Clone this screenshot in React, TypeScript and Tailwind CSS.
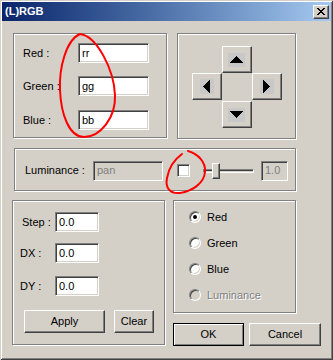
import React from "react";

type Kids = { children?: React.ReactNode };

function Group({ className = "", children }: { className?: string } & Kids) {
  return (
    <div className={`border border-[#808080] shadow-[inset_1px_1px_0_#fff,1px_1px_0_#fff] ${className}`}>
      {children}
    </div>
  );
}

function Field({ w, value, disabled }: { w: string; value: string; disabled?: boolean }) {
  return (
    <div
      className={`${w} h-[20px] flex items-center pl-[3px] border border-[#808080] border-b-white border-r-white shadow-[inset_1px_1px_0_#404040,inset_-1px_-1px_0_#d4d0c8] ${
        disabled ? "bg-[#d4d0c8] text-[#808080]" : "bg-white text-black"
      }`}
    >
      {value}
    </div>
  );
}

function Btn({ className = "", def, children }: { className?: string; def?: boolean } & Kids) {
  return (
    <div
      className={`flex items-center justify-center ${
        def
          ? "border border-black shadow-[inset_1px_1px_0_#fff,inset_-1px_-1px_0_#808080]"
          : "border border-white border-b-[#404040] border-r-[#404040] shadow-[inset_-1px_-1px_0_#808080]"
      } ${className}`}
    >
      {children}
    </div>
  );
}

function ArrowBtn({ dir, className = "" }: { dir: "up" | "down" | "left" | "right"; className?: string }) {
  const vertical = dir === "up" || dir === "down";
  return (
    <div
      className={`w-[30px] h-[27px] border border-white border-b-[#404040] border-r-[#404040] shadow-[inset_-1px_-1px_0_#808080] flex items-center justify-center ${className}`}
    >
      <div
        className={`${vertical ? "w-[17px] h-[14px]" : "w-[14px] h-[15px]"} bg-[#c8c8c8] flex items-center justify-center`}
      >
        {dir === "up" && (
          <svg width="13" height="7" viewBox="0 0 13 7" shapeRendering="crispEdges">
            <polygon points="6.5,0 13,7 0,7" fill="#000" />
          </svg>
        )}
        {dir === "down" && (
          <svg width="13" height="7" viewBox="0 0 13 7" shapeRendering="crispEdges">
            <polygon points="0,0 13,0 6.5,7" fill="#000" />
          </svg>
        )}
        {dir === "left" && (
          <svg width="7" height="13" viewBox="0 0 7 13" shapeRendering="crispEdges">
            <polygon points="7,0 7,13 0,6.5" fill="#000" />
          </svg>
        )}
        {dir === "right" && (
          <svg width="7" height="13" viewBox="0 0 7 13" shapeRendering="crispEdges">
            <polygon points="0,0 7,6.5 0,13" fill="#000" />
          </svg>
        )}
      </div>
    </div>
  );
}

function Radio({ checked, disabled, label }: { checked?: boolean; disabled?: boolean; label: string }) {
  return (
    <div className="h-[26px] flex items-center">
      <div
        className={`w-[12px] h-[12px] rounded-full border border-[#808080] border-b-white border-r-white shadow-[inset_1px_1px_0_#404040,inset_-1px_-1px_0_#d4d0c8] flex items-center justify-center ${
          disabled ? "bg-[#d4d0c8]" : "bg-white"
        }`}
      >
        {checked && <div className="w-[4px] h-[4px] rounded-full bg-black" />}
      </div>
      <span className={`ml-[6px] ${disabled ? "text-[#808080] [text-shadow:1px_1px_0_#fff]" : "text-black"}`}>
        {label}
      </span>
    </div>
  );
}

function CloseGlyph() {
  const rows = [
    "XX....XX",
    ".XX..XX.",
    "..XXXX..",
    "...XX...",
    "..XXXX..",
    ".XX..XX.",
    "XX....XX",
  ];
  return (
    <svg width="8" height="7" viewBox="0 0 8 7" shapeRendering="crispEdges">
      {rows.flatMap((r, y) =>
        r.split("").map((c, x) => (c === "X" ? <rect key={`${x}-${y}`} x={x} y={y} width="1" height="1" fill="#000" /> : null))
      )}
    </svg>
  );
}

export default function App() {
  return (
    <div className="relative w-[333px] h-[360px] p-[2px] bg-[#d4d0c8] flex flex-col font-['Liberation_Sans',Arial,sans-serif] text-[11px] leading-none text-black shadow-[inset_1px_1px_0_#d4d0c8,inset_-1px_-1px_0_#404040,inset_2px_2px_0_#fff,inset_-2px_-2px_0_#808080]">
      {/* Title bar */}
      <div className="h-[19px] shrink-0 bg-linear-to-r from-[#0a246a] to-[#a6caf0] flex items-center pl-[3px] pr-[2px]">
        <span className="text-white font-bold text-[11px]">(L)RGB</span>
        <div className="ml-auto w-[16px] h-[14px] bg-[#d4d0c8] border border-white border-b-[#404040] border-r-[#404040] shadow-[inset_-1px_-1px_0_#808080] flex items-center justify-center">
          <CloseGlyph />
        </div>
      </div>

      {/* Row 1 */}
      <div className="mt-[12px] flex items-start">
        <Group className="ml-[11px] w-[154px] h-[105px] pt-[9px] pl-[9px] flex flex-col">
          <div className="h-[20px] flex items-center">
            <span className="w-[55px]">Red :</span>
            <Field w="w-[71px]" value="rr" />
          </div>
          <div className="mt-[13px] h-[20px] flex items-center">
            <span className="w-[55px]">Green :</span>
            <Field w="w-[71px]" value="gg" />
          </div>
          <div className="mt-[14px] h-[20px] flex items-center">
            <span className="w-[55px]">Blue :</span>
            <Field w="w-[71px]" value="bb" />
          </div>
        </Group>
        <Group className="ml-[10px] w-[119px] h-[106px] flex items-center justify-center">
          <div className="grid grid-cols-[30px_30px_30px] grid-rows-[27px_27px_27px] pt-[1px]">
            <ArrowBtn dir="up" className="col-start-2 row-start-1" />
            <ArrowBtn dir="left" className="col-start-1 row-start-2" />
            <ArrowBtn dir="right" className="col-start-3 row-start-2" />
            <ArrowBtn dir="down" className="col-start-2 row-start-3 mt-[1px]" />
          </div>
        </Group>
      </div>

      {/* Row 2: Luminance */}
      <Group className="mt-[9px] ml-[12px] w-[282px] h-[43px] pt-[2px] pl-[10px] flex items-center">
        <span className="w-[68px]">Luminance :</span>
        <Field w="w-[70px]" value="pan" disabled />
        <div className="ml-[14px] w-[13px] h-[13px] bg-white border border-[#808080] border-b-white border-r-white shadow-[inset_1px_1px_0_#404040,inset_-1px_-1px_0_#d4d0c8]" />
        <div className="ml-[13px] relative w-[51px] h-[16px] flex items-center">
          <div className="w-full h-[4px] border border-[#808080] border-b-white border-r-white shadow-[inset_1px_1px_0_#404040,inset_-1px_-1px_0_#d4d0c8]" />
          <div className="absolute left-[9px] top-0 w-[8px] h-[16px] bg-[#d4d0c8] border border-white border-b-[#404040] border-r-[#404040] shadow-[inset_-1px_-1px_0_#808080]" />
        </div>
        <div className="ml-[7px]">
          <Field w="w-[27px]" value="1.0" disabled />
        </div>
      </Group>

      {/* Row 3 */}
      <div className="mt-[9px] flex items-start">
        <Group className="ml-[10px] w-[153px] h-[145px] pt-[11px] pl-[7px] flex flex-col">
          <div className="h-[20px] flex items-center">
            <span className="ml-[2px] w-[33px]">Step :</span>
            <Field w="w-[44px]" value="0.0" />
          </div>
          <div className="mt-[11px] h-[20px] flex items-center">
            <span className="w-[35px]">DX :</span>
            <Field w="w-[44px]" value="0.0" />
          </div>
          <div className="mt-[13px] h-[20px] flex items-center">
            <span className="w-[35px]">DY :</span>
            <Field w="w-[44px]" value="0.0" />
          </div>
          <div className="mt-[14px] flex">
            <Btn className="ml-[4px] w-[81px] h-[23px]">Apply</Btn>
            <Btn className="ml-[9px] w-[40px] h-[23px]">Clear</Btn>
          </div>
        </Group>
        <div className="ml-[8px] flex flex-col">
          <Group className="w-[123px] h-[113px] pt-[3px] pl-[15px] flex flex-col">
            <Radio checked label="Red" />
            <Radio label="Green" />
            <Radio label="Blue" />
            <Radio disabled label="Luminance" />
          </Group>
          <div className="mt-[10px] flex gap-[5px]">
            <Btn def className="w-[71px] h-[23px]">OK</Btn>
            <Btn className="w-[72px] h-[23px]">Cancel</Btn>
          </div>
        </div>
      </div>

      {/* Red hand-drawn annotation marks */}
      <svg
        className="absolute left-0 top-0 pointer-events-none"
        width="333"
        height="360"
        viewBox="0 0 333 360"
        fill="none"
      >
        <path
          d="M80 34 C66 40, 59 68, 60 90 C61 114, 69 137, 84 137 C100 137, 116 118, 115 95 C114 70, 97 36, 80 34"
          stroke="#ff0000"
          strokeWidth="2"
          strokeLinecap="round"
        />
        <path
          d="M188 151 C198 154, 206 162, 205 172 C204 183, 193 191, 180 193 C170 194, 165 188, 167 178 C169 167, 175 159, 182 154"
          stroke="#ff0000"
          strokeWidth="2"
          strokeLinecap="round"
        />
      </svg>
    </div>
  );
}
